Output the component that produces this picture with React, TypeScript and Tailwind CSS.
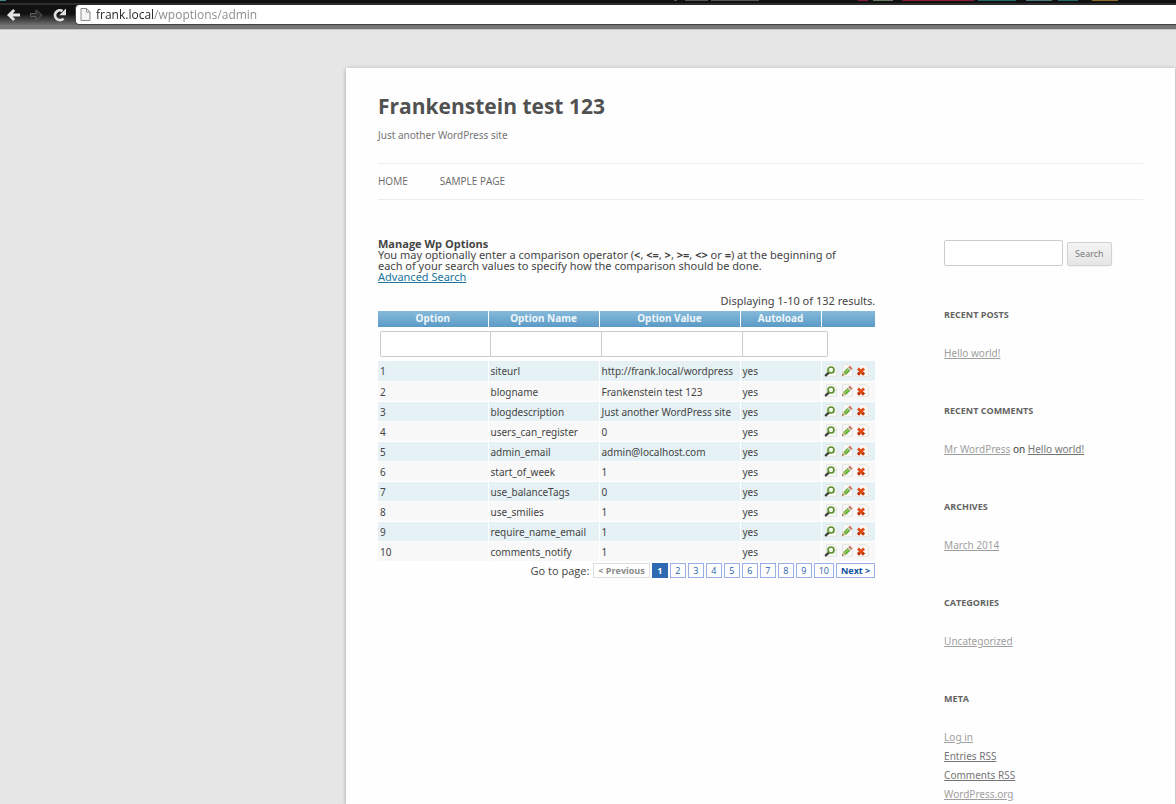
import { useState } from "react";

const options = [
  { id: 1, name: "siteurl", value: "http://frank.local/wordpress" },
  { id: 2, name: "blogname", value: "Frankenstein test 123" },
  { id: 3, name: "blogdescription", value: "Just another WordPress site" },
  { id: 4, name: "users_can_register", value: "0" },
  { id: 5, name: "admin_email", value: "admin@localhost.com" },
  { id: 6, name: "start_of_week", value: "1" },
  { id: 7, name: "use_balanceTags", value: "0" },
  { id: 8, name: "use_smilies", value: "1" },
  { id: 9, name: "require_name_email", value: "1" },
  { id: 10, name: "comments_notify", value: "1" },
];

const columns = [
  { label: "Option", width: "w-[110px]", input: "w-full" },
  { label: "Option Name", width: "w-[111px]", input: "w-full" },
  { label: "Option Value", width: "w-[141px]", input: "w-full" },
  { label: "Autoload", width: "w-[81px]", input: "w-20" },
];

const pages = [1, 2, 3, 4, 5, 6, 7, 8, 9, 10];

const linkClass = "text-[#9f9f9f] underline";
const visitedClass = "text-[#757575] underline";
const cellClass = "border-r border-white px-0.5 pt-0.5 pb-0 leading-[17px] whitespace-nowrap";

const PaperShape = () => (
  <path d="M3.5 1.5h7l3 3v9h-10z" fill="#f7f7f5" stroke="#e6e6e4" />
);

const ViewIcon = () => (
  <svg className="size-4" viewBox="0 0 16 16">
    <PaperShape />
    <path d="M5.8 9.6 2.8 12.4" stroke="#3c3c3c" strokeWidth="2.2" strokeLinecap="round" />
    <circle cx="8" cy="7" r="3" fill="#f4f9ee" stroke="#5e9130" strokeWidth="1.7" />
  </svg>
);

const UpdateIcon = () => (
  <svg className="size-4" viewBox="0 0 16 16">
    <PaperShape />
    <path d="m3 12.8 1-3.4 2.6 2.6z" fill="#d8b470" />
    <path d="m4.2 9.2 4.300-4.300 2.800 2.800L7 12z" fill="#6aae3a" />
    <path d="m6 9.8 4-4" stroke="#a8da78" />
    <path d="m8.5 4.9 1-1 2.800 2.800-1 1z" fill="#c9c9c9" />
    <path d="m9.5 3.9 1.300-1.200 2.700 2.700-1.200 1.300z" fill="#c9664e" />
    <path d="m3 12.8.5-1.700 1.200 1.200z" fill="#444" />
  </svg>
);

const DeleteIcon = () => (
  <svg className="size-4" viewBox="0 0 16 16">
    <PaperShape />
    <path d="m3 5.6 6 6M9 5.600l-6 6" stroke="#e04c18" strokeWidth="2.8" />
    <path d="m3 11.600 1.700-1.700m2.600 0L9 11.600" stroke="#bd3612" strokeWidth="2.8" />
  </svg>
);

const BrowserBar = () => {
  const [url, setUrl] = useState("frank.local/wpoptions/admin");

  return (
    <header className="flex h-[30px] shrink-0 flex-col border-b border-[#c4c4c4] bg-[linear-gradient(#111_0,#111_14px,#777_26px)]">
      {/* Bottom edge of the tab strip */}
      <svg className="h-[5px] w-full shrink-0" viewBox="0 0 1176 5" preserveAspectRatio="none">
        <path d="M0 0h1176v3H0z" fill="#111" />
        <path d="M0 3h1176v2H0z" fill="#2e2e2e" />
        <path d="M674 .5h3M685 .5h23m3 0h48" stroke="#555" />
        <path d="M858 .5h10m34 0h72" stroke="#8d1a34" />
        <path d="M873 .5h20" stroke="#687a66" />
        <path d="M978 .5h38m42 0h20" stroke="#20686c" />
        <path d="M1026 .5h26" stroke="#4c7a7a" />
        <path d="M1092 .5h26" stroke="#8a6c28" />
        <path d="M0 .5h6" stroke="#3c8a8a" />
      </svg>
      <div className="flex min-h-0 flex-1">
        <div className="flex w-[75px] shrink-0 items-start gap-[7px] pt-0.5 pl-1.5">
          <button type="button" aria-label="Back">
            <svg className="size-4" viewBox="0 0 16 16" fill="none" stroke="#e4e4e4" strokeWidth="2.8">
              <path d="M8.2 3 3 8l5.2 5M3 8h11" />
            </svg>
          </button>
          <button type="button" aria-label="Forward">
            <svg className="size-4" viewBox="0 0 16 16" fill="#2c2c2c" stroke="#5c5c5c">
              <path d="M1.5 6.5H7V3l6 5-6 5V9.500H1.500z" />
            </svg>
          </button>
          <button type="button" aria-label="Reload">
            <svg className="size-4" viewBox="0 0 16 16">
              <path d="M11.500 11.600A4.900 4.900 0 1 1 10.500 4" fill="none" stroke="#e0e0e0" strokeWidth="2.8" />
              <path d="M14 1.500v6.800H7.200z" fill="#e0e0e0" />
            </svg>
          </button>
        </div>
        <div className="flex h-5 flex-1 items-center gap-[5px] rounded-l-sm border-b border-l border-[#444] bg-white pl-1">
          <svg className="h-[13px] w-[11px] shrink-0" viewBox="0 0 11 13" fill="#f4f4f4" stroke="#8c8c8c">
            <path d="M1 .5h5.500l3.500 3.500v8.500H1zM6.500.5V4H10" />
          </svg>
          <input
            type="text"
            aria-label="Address"
            value={url}
            onChange={(e) => setUrl(e.target.value)}
            className="h-[18px] flex-1 bg-[linear-gradient(90deg,#222_58px,#888_58px)] bg-clip-text font-['Open_Sans',sans-serif] text-[12px] text-transparent outline-none"
          />
        </div>
      </div>
    </header>
  );
};

const OptionsTable = () => (
  <table className="w-full table-fixed border-collapse text-[10px] text-[#444]">
    <thead>
      <tr className="h-4 bg-linear-to-b from-[#86bada] to-[#5a9ac6] text-[#eef6fb]">
        {columns.map((col) => (
          <th
            key={col.label}
            className={`${col.width} border-r border-white p-0 align-top leading-[14px] font-bold`}
          >
            {col.label}
          </th>
        ))}
        <th className="p-0" aria-label="Actions" />
      </tr>
      <tr className="h-[34px]">
        {columns.map((col) => (
          <td key={col.label} className="px-0.5 py-0">
            <input
              type="text"
              aria-label={col.label}
              className={`${col.input} box-content block h-6 rounded-xs border border-[#ccc] bg-white px-0.5 outline-none`}
            />
          </td>
        ))}
        <td />
      </tr>
    </thead>
    <tbody>
      {options.map((option) => (
        <tr key={option.id} className="h-5 border-b border-white odd:bg-[#e5f1f4] even:bg-[#f8f8f8]">
          <td className={cellClass}>{option.id}</td>
          <td className={cellClass}>{option.name}</td>
          <td className={cellClass}>{option.value}</td>
          <td className={cellClass}>yes</td>
          <td className="p-0 pr-0.5">
            <div className="flex justify-center">
              <button type="button" aria-label="View"><ViewIcon /></button>
              <button type="button" aria-label="Update"><UpdateIcon /></button>
              <button type="button" aria-label="Delete"><DeleteIcon /></button>
            </div>
          </td>
        </tr>
      ))}
    </tbody>
  </table>
);

const Pager = () => (
  <nav className="flex items-center justify-end gap-0.5 pt-px text-center font-['Open_Sans',sans-serif] text-[9px] leading-[13px] text-[#2a5fa8]">
    <span className="pr-0.5 text-[11px] leading-4 text-[#444]">Go to page:</span>
    <a href="#" className="border border-[#dedede] px-1 font-bold text-[#888]">
      &lt; Previous
    </a>
    {pages.map((page) => (
      <a
        key={page}
        href="#"
        className={
          page === 1
            ? "min-w-4 border border-[#2e6ab1] bg-[#2e6ab1] px-1 font-bold text-white"
            : "min-w-4 border border-[#9aafe5] px-1"
        }
      >
        {page}
      </a>
    ))}
    <a href="#" className="border border-[#9aafe5] px-1 font-bold text-[#0e509e]">
      Next &gt;
    </a>
  </nav>
);

const Widget = ({ title, children }: { title: string; children: React.ReactNode }) => (
  <section className="mb-[38px] last:mb-0">
    <h3 className="mb-5 font-['Open_Sans',sans-serif] text-[9px] leading-[19px] font-bold text-[#636363] uppercase">
      {title}
    </h3>
    <ul className="text-[10px] leading-[19px]">{children}</ul>
  </section>
);

const Sidebar = () => (
  <aside className="w-[26%] pt-0.5">
    <form className="mb-[39px] flex items-end gap-1" onSubmit={(e) => e.preventDefault()}>
      <input
        type="text"
        aria-label="Search for"
        className="h-[26px] w-[119px] rounded-xs border border-[#ccc] bg-white px-1 text-[10px] outline-none"
      />
      <button
        type="submit"
        className="h-6 rounded-xs border border-[#d2d2d2] bg-linear-to-b from-[#f4f4f4] to-[#e6e6e6] px-[7px] text-[9px] text-[#7c7c7c] shadow-xs"
      >
        Search
      </button>
    </form>
    <Widget title="Recent Posts">
      <li><a href="#" className={linkClass}>Hello world!</a></li>
    </Widget>
    <Widget title="Recent Comments">
      <li>
        <a href="#" className={linkClass}>Mr WordPress</a> on{" "}
        <a href="#" className={visitedClass}>Hello world!</a>
      </li>
    </Widget>
    <Widget title="Archives">
      <li><a href="#" className={linkClass}>March 2014</a></li>
    </Widget>
    <Widget title="Categories">
      <li><a href="#" className={linkClass}>Uncategorized</a></li>
    </Widget>
    <Widget title="Meta">
      <li><a href="#" className={linkClass}>Log in</a></li>
      <li><a href="#" className={visitedClass}>Entries RSS</a></li>
      <li><a href="#" className={visitedClass}>Comments RSS</a></li>
      <li><a href="#" className={linkClass}>WordPress.org</a></li>
    </Widget>
  </aside>
);

export default function App() {
  return (
    <div className="flex min-h-screen flex-col bg-[#e6e6e6] font-['Noto_Sans','Open_Sans',sans-serif] text-[#444]">
      <BrowserBar />
      <div className="mt-[38px] mr-px ml-[346px] flex-1 bg-[#fefefe] px-8 shadow-[0_1px_4px_rgba(0,0,0,0.3)]">
        <header className="pt-[18px]">
          <h1 className="font-['Open_Sans',sans-serif] text-[21px] leading-10 font-bold text-[#515151]">
            Frankenstein test 123
          </h1>
          <p className="text-[10px] leading-[19px] text-[#757575]">Just another WordPress site</p>
          <nav className="mt-[18px] flex gap-8 border-y border-[#ededed] font-['Open_Sans',sans-serif] text-[10px] leading-[35px] text-[#6a6a6a] uppercase">
            <a href="#">Home</a>
            <a href="#">Sample Page</a>
          </nav>
        </header>
        <div className="flex justify-between pt-[38px]">
          <main className="w-[65%]">
            <div className="pr-6 text-[11px] leading-[11px]">
              <h2 className="font-['Open_Sans',sans-serif] font-bold">Manage Wp Options</h2>
              <p>
                You may optionally enter a comparison operator (<b>&lt;</b>, <b>&lt;=</b>, <b>&gt;</b>,{" "}
                <b>&gt;=</b>, <b>&lt;&gt;</b> or <b>=</b>) at the beginning of each of your search values to
                specify how the comparison should be done.
              </p>
              <a href="#" className="text-[#21759b] underline">Advanced Search</a>
            </div>
            <p className="mt-[13px] mb-[5px] text-right text-[11px] leading-[11px]">Displaying 1-10 of 132 results.</p>
            <OptionsTable />
            <Pager />
          </main>
          <Sidebar />
        </div>
      </div>
    </div>
  );
}
